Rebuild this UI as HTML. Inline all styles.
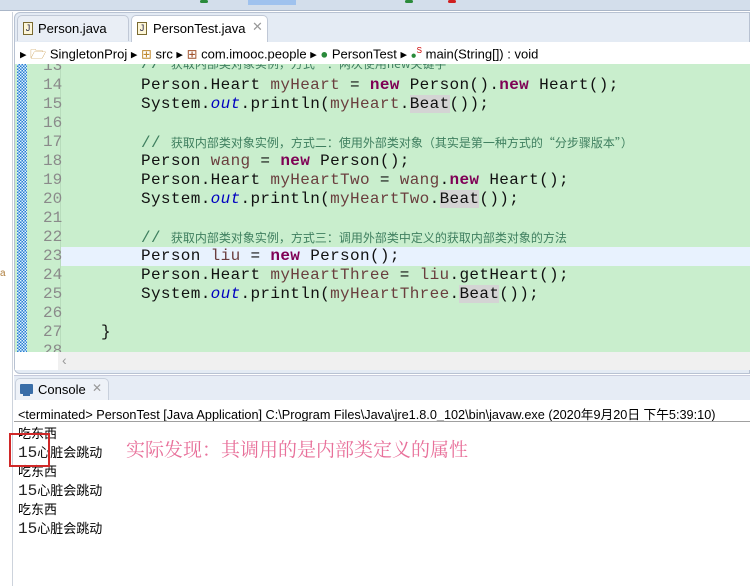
<!DOCTYPE html>
<html><head><meta charset="utf-8"><style>
*{margin:0;padding:0;box-sizing:border-box}
body{width:750px;height:586px;overflow:hidden;background:#fff;position:relative;font-family:"Liberation Sans","Noto Sans CJK SC",sans-serif;}
.abs{position:absolute}
.code{font-family:"Liberation Mono","Noto Sans CJK SC",monospace;font-size:16px;letter-spacing:0.35px;white-space:pre;color:#111;}
.ln{position:absolute;left:28px;font-family:"Liberation Mono",monospace;font-size:16px;color:#8a8a8a;}
.k{color:#7f0055;font-weight:bold}
.v{color:#6a3e3e}
.o{color:#0000c0;font-style:italic}
.c{color:#3f7f5f;font-family:"Noto Sans CJK SC",sans-serif;font-size:12px;letter-spacing:0}
.cm{color:#3f7f5f}
.b{background:#d4d4d4}
.row{position:absolute;left:141px;height:19px;line-height:19px}
.out{position:absolute;left:18px;font-size:13px;color:#000;font-family:"Liberation Sans","Noto Sans CJK SC",sans-serif}
.out .n{font-family:"Liberation Mono",monospace;font-size:16px;color:#222}
</style></head><body>
<div class="abs" style="left:0;top:0;width:750px;height:11px;background:#d3deeb;border-bottom:1px solid #aab6c8"></div>
<div class="abs" style="left:248px;top:0;width:48px;height:5px;background:#9fc2ee"></div>
<div class="abs" style="left:200px;top:0;width:8px;height:3px;background:#2a8a3a;border-radius:3px"></div>
<div class="abs" style="left:405px;top:0;width:8px;height:3px;background:#2a8a3a;border-radius:3px"></div>
<div class="abs" style="left:448px;top:0;width:8px;height:3px;background:#d02020;border-radius:3px"></div>
<div class="abs" style="left:0;top:12px;width:13px;height:574px;background:#fff;border-right:1px solid #cdd3dc"></div>
<div class="abs" style="left:0;top:268px;font-size:10px;color:#b08040">a</div>
<div class="abs" style="left:14px;top:12px;width:736px;height:362px;background:#e4ebf4;border:1px solid #b8c2d2;border-radius:6px 0 0 6px"></div>
<div class="abs" style="left:17px;top:15px;width:112px;height:26px;background:#e9eef5;border:1px solid #c0c8d6;border-bottom:none;border-radius:5px 5px 0 0"></div>
<div class="abs" style="left:23px;top:22px;width:10px;height:13px;border:1px solid #7a6a30;background:#fdf6d8;font-size:9px;color:#224;text-align:center;line-height:11px">J</div>
<div class="abs" style="left:38px;top:21px;font-size:13px;color:#000">Person.java</div>
<div class="abs" style="left:131px;top:15px;width:137px;height:27px;background:#fff;border:1px solid #c0c8d6;border-bottom:none;border-radius:5px 5px 0 0"></div>
<div class="abs" style="left:137px;top:22px;width:10px;height:13px;border:1px solid #7a6a30;background:#fdf6d8;font-size:9px;color:#224;text-align:center;line-height:11px">J</div>
<div class="abs" style="left:153px;top:21px;font-size:13px;color:#000">PersonTest.java</div>
<div class="abs" style="left:252px;top:19px;font-size:13px;color:#999">✕</div>
<div class="abs" style="left:15px;top:42px;width:735px;height:22px;background:#fff"></div>
<div class="abs" style="left:20px;top:42px;font-size:13px;color:#000;white-space:pre;line-height:18px">▸ <span style="color:#c08a30">🗁</span> SingletonProj ▸ <span style="color:#c08a30">⊞</span> src ▸ <span style="color:#a0522d">⊞</span> com.imooc.people ▸ <span style="color:#2a8a3a">●</span> PersonTest ▸ <span style="color:#2a8a3a;font-size:10px">●</span><sup style="color:#c00;font-size:8px">S</sup> main(String[]) : void</div>
<div class="abs" style="left:15px;top:64px;width:735px;height:288px;background:#c9eecd;overflow:hidden">
  <div class="abs" style="left:2px;top:0;width:10px;height:288px;background:repeating-conic-gradient(#2a7fd0 0 25%,#dff0ff 0 50%) 0 0/3px 3px"></div>
  <div class="abs" style="left:45px;top:0;width:1px;height:288px;background:#b8dcbc"></div>
  <div class="abs" style="left:46px;top:183px;width:689px;height:19px;background:#e8f2fe"></div>
</div>
<div class="abs" style="left:15px;top:64px;width:735px;height:288px;overflow:hidden">
<div class="ln" style="top:-7px">13</div><div class="ln" style="top:12px">14</div><div class="ln" style="top:31px">15</div><div class="ln" style="top:50px">16</div><div class="ln" style="top:69px">17</div><div class="ln" style="top:88px">18</div><div class="ln" style="top:107px">19</div><div class="ln" style="top:126px">20</div><div class="ln" style="top:145px">21</div><div class="ln" style="top:164px">22</div><div class="ln" style="top:183px">23</div><div class="ln" style="top:202px">24</div><div class="ln" style="top:221px">25</div><div class="ln" style="top:240px">26</div><div class="ln" style="top:259px">27</div><div class="ln" style="top:278px">28</div>
</div>
<div class="abs code" style="left:0;top:64px;width:750px;height:288px;overflow:hidden">
<div class="row" style="top:-10px"><span class="cm">//</span> <span class="c">获取内部类对象实例，方式一：两次使用new关键字</span></div>
<div class="row" style="top:12px">Person.Heart <span class="v">myHeart</span> = <span class="k">new</span> Person().<span class="k">new</span> Heart();</div>
<div class="row" style="top:31px">System.<span class="o">out</span>.println(<span class="v">myHeart</span>.<span class="b">Beat</span>());</div>
<div class="row" style="top:69px"><span class="cm">//</span> <span class="c">获取内部类对象实例，方式二：使用外部类对象（其实是第一种方式的“分步骤版本”）</span></div>
<div class="row" style="top:88px">Person <span class="v">wang</span> = <span class="k">new</span> Person();</div>
<div class="row" style="top:107px">Person.Heart <span class="v">myHeartTwo</span> = <span class="v">wang</span>.<span class="k">new</span> Heart();</div>
<div class="row" style="top:126px">System.<span class="o">out</span>.println(<span class="v">myHeartTwo</span>.<span class="b">Beat</span>());</div>
<div class="row" style="top:164px"><span class="cm">//</span> <span class="c">获取内部类对象实例，方式三：调用外部类中定义的获取内部类对象的方法</span></div>
<div class="row" style="top:183px">Person <span class="v">liu</span> = <span class="k">new</span> Person();</div>
<div class="row" style="top:202px">Person.Heart <span class="v">myHeartThree</span> = <span class="v">liu</span>.getHeart();</div>
<div class="row" style="top:221px">System.<span class="o">out</span>.println(<span class="v">myHeartThree</span>.<span class="b">Beat</span>());</div>
<div class="row" style="top:259px;left:101px">}</div>
</div>
<div class="abs" style="left:15px;top:352px;width:735px;height:18px;background:#f0f0f0"></div>
<div class="abs" style="left:15px;top:352px;width:43px;height:18px;background:#fff"></div>
<div class="abs" style="left:62px;top:352px;font-size:14px;color:#999">‹</div>
<div class="abs" style="left:14px;top:375px;width:736px;height:25px;background:#e6ecf5;border-top:1px solid #c6cadc"></div>
<div class="abs" style="left:15px;top:378px;width:94px;height:23px;background:#eef2f8;border:1px solid #c8d0dc;border-bottom:none;border-radius:5px 5px 0 0"></div>
<div class="abs" style="left:20px;top:384px;width:13px;height:10px;background:#3a6ea8;border-radius:1px"></div>
<div class="abs" style="left:23px;top:394px;width:7px;height:2px;background:#3a6ea8"></div>
<div class="abs" style="left:38px;top:382px;font-size:13px;color:#000">Console</div>
<div class="abs" style="left:92px;top:381px;font-size:12px;color:#999">✕</div>
<div class="abs" style="left:14px;top:400px;width:736px;height:186px;background:#fff"></div>
<div class="abs" style="left:18px;top:404px;font-size:12.7px;color:#000;white-space:pre">&lt;terminated&gt; PersonTest [Java Application] C:\Program Files\Java\jre1.8.0_102\bin\javaw.exe (2020年9月20日 下午5:39:10)</div>
<div class="abs" style="left:14px;top:421px;width:736px;height:1px;background:#a0a0a0"></div>
<div class="out" style="top:423px">吃东西</div>
<div class="out" style="top:442px"><span class="n">15</span>心脏会跳动</div>
<div class="out" style="top:461px">吃东西</div>
<div class="out" style="top:480px"><span class="n">15</span>心脏会跳动</div>
<div class="out" style="top:499px">吃东西</div>
<div class="out" style="top:518px"><span class="n">15</span>心脏会跳动</div>
<div class="abs" style="left:9px;top:433px;width:41px;height:34px;border:2px solid #d02828"></div>
<div class="abs" style="left:126px;top:435px;font-size:19px;color:#e8709a;font-family:'Noto Serif CJK SC',serif">实际发现：其调用的是内部类定义的属性</div>
</body></html>
